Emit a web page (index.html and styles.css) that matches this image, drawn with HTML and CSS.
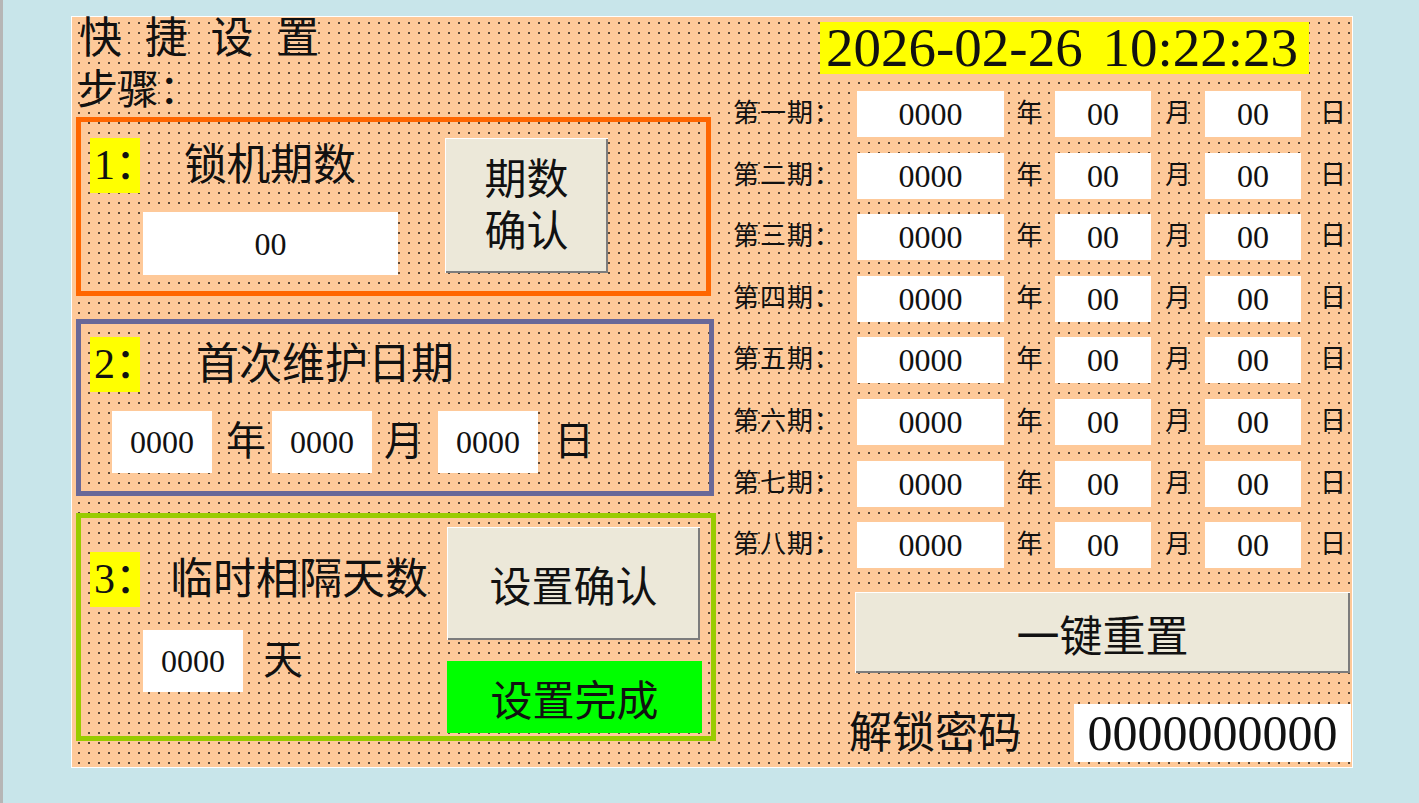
FILE: index.html
```html
<!DOCTYPE html>
<html lang="zh-CN">
<head>
    <meta charset="UTF-8">
    <title>快捷设置</title>
    <link rel="stylesheet" href="styles.css">
</head>
<body>

    <div class="screen">

        <!-- Left half: setup steps -->
        <div class="left">
            <div class="title">快 捷 设 置</div>
            <div class="subtitle">步骤：</div>

            <!-- Step 1 -->
            <div class="step step-1">
                <div class="step-main">
                    <div class="step-head">
                        <span class="tag">1：</span>
                        <span class="step-name name-1">锁机期数</span>
                    </div>
                    <div class="field field-count">00</div>
                </div>
                <div class="btn btn-period">期数<br>确认</div>
            </div>

            <!-- Step 2 -->
            <div class="step step-2">
                <div class="step-head">
                    <span class="tag">2：</span>
                    <span class="step-name name-2">首次维护日期</span>
                </div>
                <div class="date-row">
                    <div class="field field-date first">0000</div>
                    <span class="date-unit u-year">年</span>
                    <div class="field field-date">0000</div>
                    <span class="date-unit u-month">月</span>
                    <div class="field field-date">0000</div>
                    <span class="date-unit u-day">日</span>
                </div>
            </div>

            <!-- Step 3 -->
            <div class="step step-3">
                <div class="step-main main-3">
                    <div class="step-head">
                        <span class="tag">3：</span>
                        <span class="step-name name-3">临时相隔天数</span>
                    </div>
                    <div class="days-row">
                        <div class="field field-days">0000</div>
                        <span class="days-unit">天</span>
                    </div>
                </div>
                <div class="step-actions">
                    <div class="btn btn-confirm">设置确认</div>
                    <div class="done">设置完成</div>
                </div>
            </div>
        </div>

        <!-- Right half: clock and period table -->
        <div class="right">
            <div class="clock">2026-02-26 10:22:23</div>

            <div class="periods">
                <div class="period"><span class="period-name">第一期：</span><div class="field cell-year">0000</div><span class="unit unit-year">年</span><div class="field cell-md">00</div><span class="unit unit-month">月</span><div class="field cell-md">00</div><span class="unit unit-day">日</span></div>
                <div class="period"><span class="period-name">第二期：</span><div class="field cell-year">0000</div><span class="unit unit-year">年</span><div class="field cell-md">00</div><span class="unit unit-month">月</span><div class="field cell-md">00</div><span class="unit unit-day">日</span></div>
                <div class="period"><span class="period-name">第三期：</span><div class="field cell-year">0000</div><span class="unit unit-year">年</span><div class="field cell-md">00</div><span class="unit unit-month">月</span><div class="field cell-md">00</div><span class="unit unit-day">日</span></div>
                <div class="period"><span class="period-name">第四期：</span><div class="field cell-year">0000</div><span class="unit unit-year">年</span><div class="field cell-md">00</div><span class="unit unit-month">月</span><div class="field cell-md">00</div><span class="unit unit-day">日</span></div>
                <div class="period"><span class="period-name">第五期：</span><div class="field cell-year">0000</div><span class="unit unit-year">年</span><div class="field cell-md">00</div><span class="unit unit-month">月</span><div class="field cell-md">00</div><span class="unit unit-day">日</span></div>
                <div class="period"><span class="period-name">第六期：</span><div class="field cell-year">0000</div><span class="unit unit-year">年</span><div class="field cell-md">00</div><span class="unit unit-month">月</span><div class="field cell-md">00</div><span class="unit unit-day">日</span></div>
                <div class="period"><span class="period-name">第七期：</span><div class="field cell-year">0000</div><span class="unit unit-year">年</span><div class="field cell-md">00</div><span class="unit unit-month">月</span><div class="field cell-md">00</div><span class="unit unit-day">日</span></div>
                <div class="period"><span class="period-name">第八期：</span><div class="field cell-year">0000</div><span class="unit unit-year">年</span><div class="field cell-md">00</div><span class="unit unit-month">月</span><div class="field cell-md">00</div><span class="unit unit-day">日</span></div>
            </div>

            <div class="btn btn-reset">一键重置</div>

            <div class="unlock">
                <span class="unlock-label">解锁密码</span>
                <div class="field field-pwd">0000000000</div>
            </div>
        </div>

    </div>

</body>
</html>
```

FILE: styles.css
```css
/* Page */
html {
    background-color: #c8e5ea;
}

body {
    margin: 0;
    min-height: 803px;
    box-sizing: border-box;
    border-left: 3px solid #b6b6b6;
    font-family: "Liberation Serif", "Noto Sans CJK SC", serif;
    color: #111;
    overflow: hidden;
}

/* Dotted peach panel */
.screen {
    display: flex;
    width: 1280px;
    height: 750px;
    margin: 16px 0 0 68px;
    border: 1px solid #fff;
    background-color: #fec999;
    background-image: radial-gradient(circle at 5px 5px, #5e4a38 0.8px, transparent 1.2px);
    background-size: 10px 10px;
    background-position: 2px 1px;
}

/* White value boxes */
.field {
    display: flex;
    align-items: center;
    justify-content: center;
    background-color: #fff;
    font-size: 32px;
    line-height: 1;
}

/* Raised grey buttons */
.btn {
    display: flex;
    align-items: center;
    justify-content: center;
    box-sizing: border-box;
    background-color: #ece8d9;
    box-shadow: inset 1px 1px 0 #fff, inset -2px -2px 0 #7c7c7c;
    font-size: 42px;
    text-align: center;
}

/* ---------- Left half ---------- */
.left {
    width: 648px;
    padding-left: 4px;
    box-sizing: border-box;
}

.title {
    margin: 1px 0 0 3px;
    font-size: 43px;
    line-height: 42px;
    letter-spacing: 6px;
    white-space: pre;
}

.subtitle {
    margin: 10px 0 0 1px;
    font-size: 41px;
    line-height: 41px;
}

.step {
    box-sizing: border-box;
    border: 5px solid;
    padding-left: 9px;
}

.step-1 {
    display: flex;
    width: 635px;
    height: 179px;
    margin-top: 6px;
    padding-top: 16px;
    border-color: #ff6600;
}

.step-2 {
    width: 638px;
    height: 177px;
    margin-top: 23px;
    padding-top: 13px;
    border-color: #686898;
}

.step-3 {
    display: flex;
    width: 640px;
    height: 228px;
    margin-top: 17px;
    padding-top: 9px;
    border-color: #99cc00;
}

.step-head {
    display: flex;
    align-items: center;
}

.tag {
    width: 50px;
    height: 55px;
    flex-shrink: 0;
    padding-left: 4px;
    box-sizing: border-box;
    background-color: #ffff00;
    font-size: 42px;
    line-height: 55px;
    white-space: nowrap;
}

.step-name {
    font-size: 43px;
    line-height: 43px;
    white-space: nowrap;
}

.name-1 { margin-left: 44px; }
.name-2 { margin-left: 56px; }
.name-3 { margin-left: 30px; }

.field-count {
    width: 255px;
    height: 63px;
    margin: 19px 0 0 53px;
}

.btn-period {
    width: 163px;
    height: 135px;
    margin-left: 47px;
    line-height: 52px;
}

.date-row {
    display: flex;
    align-items: center;
    margin: 19px 0 0 22px;
}

.field-date {
    width: 100px;
    height: 62px;
}

.date-unit {
    font-size: 40px;
    line-height: 40px;
}

.u-year { margin: 0 6px 0 14px; }
.u-month { margin: 0 14px 0 12px; }
.u-day { margin-left: 16px; }

.main-3 {
    margin-top: 25px;
}

.days-row {
    display: flex;
    align-items: center;
    margin-top: 23px;
}

.field-days {
    width: 100px;
    height: 62px;
    margin-left: 53px;
}

.days-unit {
    margin-left: 20px;
    font-size: 40px;
    line-height: 40px;
}

.step-actions {
    display: flex;
    flex-direction: column;
    gap: 21px;
    margin-left: 19px;
}

.btn-confirm {
    width: 253px;
    height: 113px;
}

.done {
    display: flex;
    align-items: center;
    justify-content: center;
    width: 255px;
    height: 72px;
    background-color: #00ff00;
    font-size: 42px;
}

/* ---------- Right half ---------- */
.right {
    flex: 1;
    padding-left: 13px;
}

.clock {
    width: 489px;
    height: 52px;
    margin: 5px 0 0 87px;
    padding-left: 6px;
    box-sizing: border-box;
    background-color: #ffff00;
    font-size: 55px;
    line-height: 52px;
    word-spacing: 6px;
    white-space: nowrap;
}

.periods {
    display: flex;
    flex-direction: column;
    gap: 15.6px;
    margin-top: 17px;
}

.period {
    display: flex;
    align-items: center;
    height: 46px;
}

.period-name {
    width: 124px;
    font-size: 26px;
    line-height: 26px;
    letter-spacing: 1px;
    white-space: nowrap;
}

.cell-year {
    width: 147px;
    height: 46px;
}

.cell-md {
    width: 96px;
    height: 46px;
}

.unit {
    font-size: 26px;
    line-height: 26px;
    text-align: center;
}

.unit-year { width: 51px; }
.unit-month { width: 54px; }
.unit-day { margin-left: 19px; }

.btn-reset {
    width: 495px;
    height: 81px;
    margin: 24px 0 0 122px;
    font-size: 43px;
}

.unlock {
    display: flex;
    align-items: center;
    margin: 31px 0 0 116px;
}

.unlock-label {
    font-size: 43px;
    line-height: 43px;
}

.field-pwd {
    width: 277px;
    height: 58px;
    margin-left: 53px;
    font-size: 50px;
}
```
